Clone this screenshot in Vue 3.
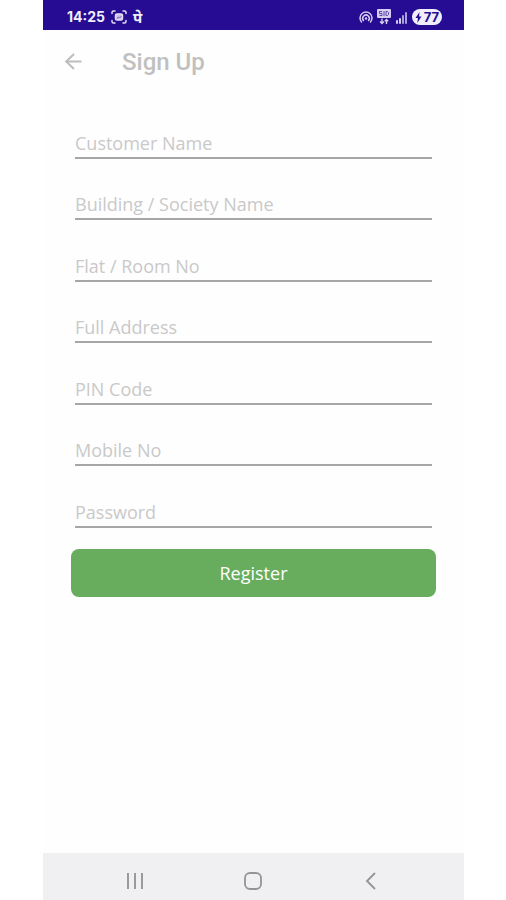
<template>
  <div class="page">
    <div class="phone">

      <!-- Status bar -->
      <div class="status-bar">
        <div class="status-left">
          <span class="clock">14:25</span>
          <svg width="16" height="16" viewBox="0 0 16 16" fill="none" stroke="#e4dff5" stroke-width="1.5"
            stroke-linecap="round" stroke-linejoin="round">
            <path d="M1 4.5V3.5Q1 2 2.5 2H4" />
            <path d="M12 2h1.5Q15 2 15 3.5V4.5" />
            <path d="M15 11.5v1Q15 14 13.5 14H12" />
            <path d="M4 14H2.5Q1 14 1 12.5v-1" />
            <rect x="4.5" y="5" width="7" height="6" rx="1.5" fill="#c9c1ea" />
            <path d="M6 9.500l1.500-1.500 1 1 1.500-1.500" stroke="#6a59b8" stroke-width="1" />
          </svg>
          <span class="pay-badge">पे</span>
        </div>
        <div class="status-right">
          <svg width="14" height="14" viewBox="0 0 14 14" fill="none" stroke="#d5cef0" stroke-width="1.5"
            stroke-linecap="round">
            <path d="M2.500 12A6 6 0 1 1 11.500 12" />
            <path d="M4.500 10.500A3.300 3.300 0 1 1 9.500 10.500" />
            <circle cx="7" cy="8.500" r="1.200" fill="#d5cef0" stroke="none" />
          </svg>
          <svg width="14" height="16" viewBox="0 0 14 16" fill="none">
            <rect x="0" y="0" width="14" height="9" rx="1" fill="#d5cef0" />
            <path d="M5 2.500H2.500v2H5v2H2.500M7 2v5M9 2.500v4h1.500l1-1v-2l-1-1z" stroke="#5a47ae" stroke-width="1" />
            <path d="M5 9.500v5M3 12.500l2 2 2-2M9.500 15v-4.500M7.800 12.200l1.700-1.700 1.700 1.700" stroke="#d5cef0"
              stroke-width="1.4" />
          </svg>
          <svg width="13" height="13" viewBox="0 0 13 13">
            <rect x="1" y="9" width="2" height="4" rx="1" fill="#d5cef0" />
            <rect x="4" y="7" width="2" height="6" rx="1" fill="#d5cef0" />
            <rect x="7" y="4" width="2" height="9" rx="1" fill="#a99fdc" />
            <rect x="10" y="1" width="2" height="12" rx="1" fill="#a99fdc" />
          </svg>
          <span class="battery">
            <svg width="7" height="11" viewBox="0 0 7 11">
              <path d="M4.5 0L0.500 6H3L2.300 11 6.500 4.500H4z" fill="#250c93" />
            </svg>
            77
          </span>
        </div>
      </div>

      <!-- Header -->
      <header class="app-header">
        <button class="back-btn" type="button" aria-label="Back">
          <svg width="18" height="18" viewBox="0 0 18 18" fill="none" stroke="#bdbdbd" stroke-width="2">
            <path d="M17.500 8.500H2.500" />
            <path d="M10 1L2.200 8.500l7.800 7.500" />
          </svg>
        </button>
        <h1>Sign Up</h1>
      </header>

      <!-- Form -->
      <form class="signup-form" @submit.prevent>
        <div class="fields">
          <div v-for="field in fields" :key="field.key" class="field">
            <input :id="field.key" v-model="form[field.key]" :type="field.type" :placeholder="field.label"
              :aria-label="field.label" autocomplete="off" />
          </div>
        </div>
        <button class="btn-register" type="submit">Register</button>
      </form>

      <!-- Navigation bar -->
      <nav class="nav-bar">
        <button type="button" aria-label="Recent apps">
          <svg width="20" height="20" viewBox="0 0 20 20" fill="none" stroke="#9a9a9c" stroke-width="2">
            <path d="M3 2v16M10 2v16M17 2v16" />
          </svg>
        </button>
        <button type="button" aria-label="Home">
          <svg width="20" height="20" viewBox="0 0 20 20" fill="none" stroke="#949496" stroke-width="1.8">
            <rect x="2" y="2" width="16" height="16" rx="5" />
          </svg>
        </button>
        <button type="button" aria-label="Back">
          <svg width="20" height="20" viewBox="0 0 20 20" fill="none" stroke="#949496" stroke-width="1.8">
            <path d="M14 2L6 10l8 8" />
          </svg>
        </button>
      </nav>

    </div>
  </div>
</template>

<script setup>
import { reactive } from 'vue'

const fields = [
  { key: 'customerName', label: 'Customer Name', type: 'text' },
  { key: 'building', label: 'Building / Society Name', type: 'text' },
  { key: 'flat', label: 'Flat / Room No', type: 'text' },
  { key: 'address', label: 'Full Address', type: 'text' },
  { key: 'pinCode', label: 'PIN Code', type: 'text' },
  { key: 'mobile', label: 'Mobile No', type: 'tel' },
  { key: 'password', label: 'Password', type: 'password' },
]

const form = reactive({
  customerName: '',
  building: '',
  flat: '',
  address: '',
  pinCode: '',
  mobile: '',
  password: '',
})
</script>

<style>
body {
  background: #fff;
}
</style>

<style scoped>
.page {
  min-height: 100vh;
  padding: 0 42px 0 43px;
  box-sizing: border-box;
  display: flex;
}

.phone {
  flex: 1;
  min-width: 0;
  display: flex;
  flex-direction: column;
  background: #fefefe;
  font-family: "Open Sans", "Noto Sans", sans-serif;
}

/* ── Status bar ── */
.status-bar {
  display: flex;
  align-items: center;
  justify-content: space-between;
  height: 30px;
  padding: 4px 22px 0 24px;
  box-sizing: border-box;
  background: #250c93;
  color: #f1eefb;
}

.status-left,
.status-right {
  display: flex;
  align-items: center;
}

.status-left {
  gap: 6px;
}

.status-right {
  gap: 4px;
}

.clock {
  font-family: Inter, sans-serif;
  font-size: 14px;
  font-weight: 700;
  line-height: 20px;
}

.pay-badge {
  font-size: 15px;
  font-weight: 700;
  line-height: 20px;
}

.battery {
  display: flex;
  align-items: center;
  gap: 2px;
  padding: 0 3px;
  border-radius: 8px;
  background: #f1eefb;
  color: #250c93;
  font-family: Inter, sans-serif;
  font-size: 13px;
  font-weight: 700;
  line-height: 16px;
}

/* ── Header ── */
.app-header {
  display: flex;
  align-items: center;
  gap: 40px;
  height: 64px;
  padding: 0 21px;
}

.app-header h1 {
  margin: 0;
  font-family: Roboto, sans-serif;
  font-size: 24px;
  font-weight: 500;
  line-height: 32px;
  color: #c0c0c0;
}

.back-btn {
  display: flex;
  padding: 0;
  border: none;
  background: none;
  cursor: pointer;
}

/* ── Form ── */
.signup-form {
  flex: 1;
  display: flex;
  flex-direction: column;
  align-items: stretch;
  padding: 3px 28px;
}

.fields {
  display: grid;
  grid-auto-rows: 1fr;
  min-height: 431px;
  padding: 0 4px;
}

.field {
  display: flex;
  align-items: flex-end;
}

.field input {
  width: 100%;
  padding: 0 0 2px;
  border: none;
  border-bottom: 2px solid #a6a6a6;
  border-radius: 0;
  outline: none;
  background: transparent;
  font-family: inherit;
  font-size: 18px;
  font-weight: 400;
  line-height: 24px;
  color: #555;
}

.field input::placeholder {
  color: #c9c9c9;
  opacity: 1;
}

.field input:focus {
  border-bottom-color: #67ad5d;
}

.btn-register {
  height: 48px;
  margin-top: 21px;
  border: none;
  border-radius: 8px;
  background: #67ad5d;
  color: #fff;
  font-family: inherit;
  font-size: 18px;
  line-height: 24px;
  cursor: pointer;
}

/* ── Navigation bar ── */
.nav-bar {
  display: flex;
  justify-content: center;
  gap: 98px;
  padding: 18px 2px 9px 0;
  background: #f0f0f2;
}

.nav-bar button {
  display: flex;
  padding: 0;
  border: none;
  background: none;
  cursor: pointer;
}
</style>
